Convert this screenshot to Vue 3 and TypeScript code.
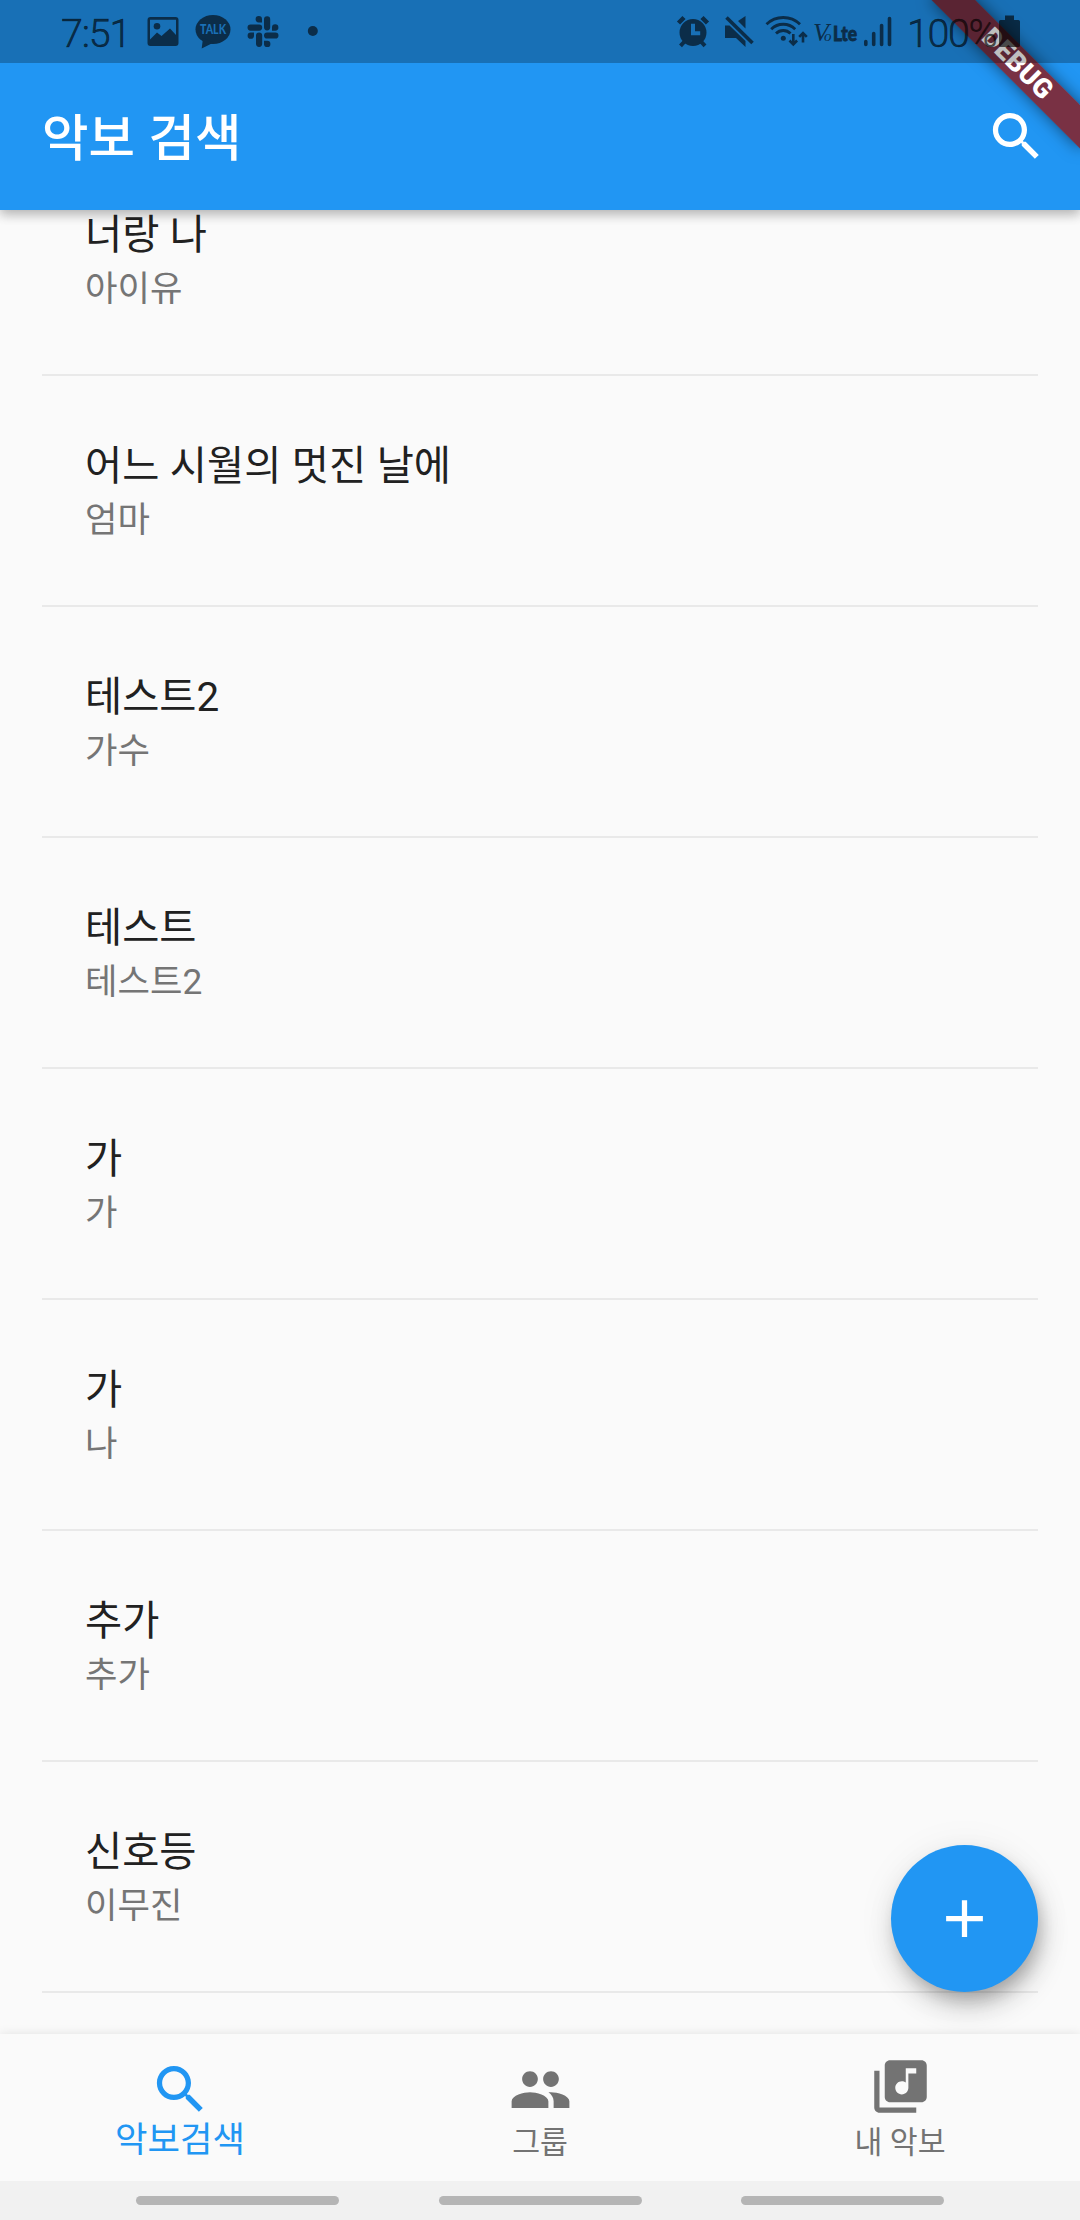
<script setup lang="ts">
interface Song {
  title: string
  artist: string
}

interface Tab {
  label: string
  icon: 'search' | 'people' | 'library'
  active?: boolean
}

const songs: Song[] = [
  { title: '너랑 나', artist: '아이유' },
  { title: '어느 시월의 멋진 날에', artist: '엄마' },
  { title: '테스트2', artist: '가수' },
  { title: '테스트', artist: '테스트2' },
  { title: '가', artist: '가' },
  { title: '가', artist: '나' },
  { title: '추가', artist: '추가' },
  { title: '신호등', artist: '이무진' },
]

const tabs: Tab[] = [
  { label: '악보검색', icon: 'search', active: true },
  { label: '그룹', icon: 'people' },
  { label: '내 악보', icon: 'library' },
]

const icons: Record<Tab['icon'], string> = {
  search:
    'M15.5 14h-.79l-.28-.27C15.41 12.59 16 11.11 16 9.5 16 5.91 13.09 3 9.5 3S3 5.91 3 9.5 5.91 16 9.5 16c1.61 0 3.09-.59 4.23-1.57l.27.28v.79l5 4.99L20.49 19l-4.99-5zm-6 0C7.01 14 5 11.99 5 9.5S7.01 5 9.5 5 14 7.01 14 9.5 11.99 14 9.5 14z',
  people:
    'M16 11c1.66 0 2.99-1.34 2.99-3S17.66 5 16 5c-1.66 0-3 1.34-3 3s1.34 3 3 3zm-8 0c1.66 0 2.99-1.34 2.99-3S9.66 5 8 5C6.34 5 5 6.34 5 8s1.34 3 3 3zm0 2c-2.33 0-7 1.17-7 3.5V19h14v-2.5c0-2.33-4.67-3.5-7-3.5zm8 0c-.29 0-.62.02-.97.05 1.16.84 1.97 1.97 1.97 3.45V19h6v-2.5c0-2.33-4.67-3.5-7-3.5z',
  library:
    'M20 2H8c-1.1 0-2 .9-2 2v12c0 1.1.9 2 2 2h12c1.1 0 2-.9 2-2V4c0-1.1-.9-2-2-2zm-2 5h-3v5.5c0 1.38-1.12 2.5-2.5 2.5S10 13.88 10 12.5s1.12-2.5 2.5-2.5c.57 0 1.08.19 1.5.51V5h4v2zM4 6H2v14c0 1.1.9 2 2 2h14v-2H4V6z',
}
</script>

<template>
  <div class="screen">
    <header class="app-bar">
      <h1>악보 검색</h1>
      <svg class="icon" viewBox="0 0 24 24"><path :d="icons.search" /></svg>
    </header>

    <main class="list">
      <article v-for="(song, i) in songs" :key="i" class="row">
        <div class="title">{{ song.title }}</div>
        <div class="artist">{{ song.artist }}</div>
      </article>
    </main>

    <button class="fab" aria-label="추가">
      <svg viewBox="0 0 24 24"><path d="M19 13h-6v6h-2v-6H5v-2h6V5h2v6h6v2z" /></svg>
    </button>

    <nav class="tabs">
      <div v-for="tab in tabs" :key="tab.label" class="tab" :class="[tab.icon, { active: tab.active }]">
        <svg class="icon" viewBox="0 0 24 24"><path :d="icons[tab.icon]" /></svg>
        <span>{{ tab.label }}</span>
      </div>
    </nav>

    <footer class="gesture-bar"><i /><i /><i /></footer>

    <div class="debug"><div class="ribbon">DEBUG</div></div>

    <div class="status">
      <div class="group left">
        <span class="clock">7:51</span>
        <!-- gallery -->
        <svg class="s-image" width="32" viewBox="147 0 32 63">
          <path fill-rule="evenodd" d="M150.500 17h25a3 3 0 0 1 3 3v23a3 3 0 0 1-3 3h-25a3 3 0 0 1-3-3V20a3 3 0 0 1 3-3zM150 19.800V39.500l7-7 4.500 3.500 8.500-7.500 6 6.500V19.800z" />
          <circle cx="157" cy="26.300" r="3.300" />
        </svg>
        <!-- talk -->
        <svg class="s-talk" width="36" viewBox="195 0 36 63">
          <ellipse cx="213" cy="29.500" rx="17.500" ry="14.500" />
          <path d="M203 38l-1.300 10.500 12-6z" />
          <text x="213" y="34.300" text-anchor="middle" textLength="26" lengthAdjust="spacingAndGlyphs">TALK</text>
        </svg>
        <!-- slack -->
        <svg class="s-slack" width="32" viewBox="247 0 32 63">
          <g fill="none" stroke="#0b2d49" stroke-width="6.200" stroke-linecap="round">
            <path d="M267.100 19.300v8M250.600 27.600h8.500M259.100 35.500v8.300M267.100 35.500h8.300" />
          </g>
          <path fill="#0b2d49" d="M262 22.500h-3.100a3.200 3.200 0 1 1 3.100-3.200zM272 30.700v-3.100a3.200 3.200 0 1 1 3.200 3.100zM264 40.700h3.100a3.200 3.200 0 1 1-3.100 3.100zM254 32.400v3.100a3.200 3.200 0 1 1-3.200-3.100z" />
        </svg>
        <svg class="s-dot" width="12" viewBox="307 0 12 63"><circle cx="312.800" cy="31" r="5" /></svg>
      </div>

      <div class="group right">
        <!-- alarm -->
        <svg width="34" viewBox="675 0 34 63">
          <path fill-rule="evenodd" d="M692 19a13.500 13.500 0 1 0 0 27 13.500 13.500 0 0 0 0-27zm-2 4.800h4v7.400h5.200v4H690z" />
          <path d="M677.500 23l5.500-5.500M701 17.500l5.500 5.500" fill="none" stroke="#0b2d49" stroke-width="4.500" />
          <path d="M684 41l-4.500 4.800M699.500 41l4.500 4.800" fill="none" stroke="#0b2d49" stroke-width="4" />
        </svg>
        <!-- muted -->
        <svg class="s-mute" width="30" viewBox="723 0 30 63">
          <path d="M724 25.500h4.500l16 15.500v6l-9.500-9h-11zM737 21l7.500-5v12.500z" />
          <path d="M725.500 17.500l26 25.500" fill="none" stroke="#0b2d49" stroke-width="3.600" />
        </svg>
        <!-- wifi -->
        <svg class="s-wifi" width="43" viewBox="764 0 43 63">
          <g fill="none" stroke="#0b2d49" stroke-width="2.800">
            <path d="M765.500 24.300a24 24 0 0 1 33.500 0M770.200 29.200a17 17 0 0 1 24 0M775 33.500a10.300 10.300 0 0 1 14.500 0" />
            <path d="M792.300 34v10M788.500 40.500l3.800 3.800 3.800-3.800M802 42.500v-9M798.200 36.800l3.800-3.800 3.800 3.800" stroke-width="2.600" />
          </g>
          <circle cx="782.300" cy="38.300" r="2.500" />
        </svg>
        <!-- VoLTE -->
        <svg class="s-volte" width="45" viewBox="812 0 45 63">
          <text y="40.500">
            <tspan class="vo" x="812">V</tspan><tspan class="vo small" x="823">o</tspan><tspan class="lte" x="832" textLength="24" lengthAdjust="spacingAndGlyphs">Lte</tspan>
          </text>
        </svg>
        <svg class="s-signal" width="29" viewBox="862 0 29 63">
          <path d="M864.800 41.500v3M872.700 33.500v11M880.600 25.500v19M888.500 18.500v26" fill="none" stroke="#0b2d49" stroke-width="3.600" stroke-linecap="round" />
        </svg>
        <span class="percent">100%</span>
        <svg class="s-battery" width="21" viewBox="999 0 21 63">
          <path d="M1005 15.500h9V20h4.500a1.500 1.500 0 0 1 1.500 1.500v24a1.500 1.500 0 0 1-1.500 1.500h-18a1.500 1.500 0 0 1-1.500-1.500v-24a1.500 1.500 0 0 1 1.500-1.500h4.500z" />
        </svg>
      </div>
    </div>
  </div>
</template>

<style>
body {
  margin: 0;
  background: #fafafa;
}
</style>

<style scoped>
.screen {
  position: relative;
  display: flex;
  flex-direction: column;
  width: 1080px;
  height: 2220px;
  overflow: hidden;
  background: #fafafa;
  font-family: Roboto, 'Noto Sans CJK KR', sans-serif;
}

.app-bar {
  position: relative;
  z-index: 2;
  flex: none;
  box-sizing: border-box;
  display: flex;
  align-items: center;
  justify-content: space-between;
  height: 210px;
  padding: 63px 32px 0 42px;
  background: #2196f3;
  color: #fff;
  box-shadow: 0 5px 10px rgba(0, 0, 0, 0.2), 0 2px 14px rgba(0, 0, 0, 0.12);
}

.app-bar h1 {
  margin: 4px 0 0;
  font-size: 50.500px;
  font-weight: 500;
  line-height: 60px;
  word-spacing: 1px;
}

.icon {
  display: block;
  width: 63px;
  height: 63px;
  fill: currentColor;
}

.list {
  height: 1824px;
  flex: none;
  overflow: hidden;
}

.row {
  box-sizing: border-box;
  height: 231px;
  margin: 0 42px;
  padding: 64px 0 0 43px;
  border-bottom: 2px solid #e9e9e9;
}

.row:first-child {
  margin-top: -65px;
}

.title {
  font-size: 40.400px;
  line-height: 54px;
  word-spacing: 0.500px;
  color: #212121;
}

.artist {
  margin-top: -1px;
  font-size: 35.300px;
  line-height: 54px;
  color: #757575;
}

.fab {
  position: absolute;
  right: 42px;
  top: 1845px;
  display: flex;
  align-items: center;
  justify-content: center;
  width: 147px;
  height: 147px;
  padding: 0;
  border: 0;
  border-radius: 50%;
  background: #2196f3;
  box-shadow: 4px 10px 16px -3px rgba(0, 0, 0, 0.2), 4px 16px 28px rgba(0, 0, 0, 0.17), 0 3px 40px rgba(0, 0, 0, 0.06);
}

.fab svg {
  width: 63px;
  height: 63px;
  fill: #fff;
}

.tabs {
  position: relative;
  z-index: 1;
  flex: none;
  display: flex;
  height: 147px;
  background: #fafafa;
  box-shadow: 0 0 10px rgba(0, 0, 0, 0.1);
}

.tab {
  flex: 1;
  display: flex;
  flex-direction: column;
  align-items: center;
  padding-top: 24px;
  color: #737373;
  font-size: 30.300px;
}

.tab span {
  line-height: 44px;
}

.tab.active {
  color: #2196f3;
  font-size: 35.300px;
}

.tab.active span {
  margin-top: -3px;
}

.tab.library {
  padding-top: 21px;
}

.tab.library span {
  margin-top: 3px;
}

.gesture-bar {
  position: relative;
  z-index: 1;
  flex: 1;
  display: flex;
  gap: 99.500px;
  padding: 15px 0 0 136px;
  background: #f1f1f1;
}

.gesture-bar i {
  width: 203px;
  height: 9px;
  border-radius: 5px;
  background: #b5b5b5;
}

.debug {
  position: absolute;
  z-index: 3;
  left: 1080px;
  top: 0;
  width: 0;
  height: 0;
  transform: rotate(45deg);
}

.ribbon {
  position: absolute;
  box-sizing: border-box;
  left: -105px;
  top: 73.500px;
  width: 210px;
  height: 31.500px;
  padding-left: 2px;
  background: rgba(144, 22, 22, 0.795);
  box-shadow: 0 0 16px rgba(0, 0, 0, 0.5);
  color: #fff;
  font-size: 27px;
  font-weight: 900;
  letter-spacing: 0.300px;
  line-height: 31.500px;
  text-align: center;
}

.status {
  position: absolute;
  z-index: 4;
  left: 0;
  top: 0;
  box-sizing: border-box;
  display: flex;
  justify-content: space-between;
  width: 1080px;
  height: 63px;
  padding: 0 60px 0 61px;
  background: rgba(0, 0, 0, 0.25);
  color: rgba(0, 0, 0, 0.62);
}

.group {
  display: flex;
}

.status svg {
  flex: none;
  height: 63px;
  fill: #0b2d49;
}

.status .s-battery {
  fill: currentColor;
}

.clock,
.percent {
  flex: none;
  font-size: 39.500px;
  font-weight: 300;
  line-height: 67px;
  white-space: nowrap;
  -webkit-text-stroke: 0.500px currentColor;
}

.clock {
  width: 65px;
  letter-spacing: -1.200px;
}

.percent {
  width: 93px;
  margin-left: 15px;
  margin-right: -1px;
  letter-spacing: -1.400px;
}

.s-image {
  margin-left: 21px;
}

.s-talk,
.s-slack {
  margin-left: 16px;
}

.status .s-talk text {
  fill: #1a70b5;
  font: 900 12.500px Lato, sans-serif;
}

.s-dot {
  margin-left: 28px;
}

.s-mute {
  margin-left: 14px;
}

.s-wifi {
  margin-left: 11px;
}

.s-volte,
.s-signal {
  margin-left: 5px;
}

.vo {
  font: italic 26px 'Liberation Serif', serif;
}

.vo.small {
  font-size: 15px;
}

.lte {
  font: 900 20px Lato, sans-serif;
  stroke: #0b2d49;
  stroke-width: 0.800px;
}
</style>
